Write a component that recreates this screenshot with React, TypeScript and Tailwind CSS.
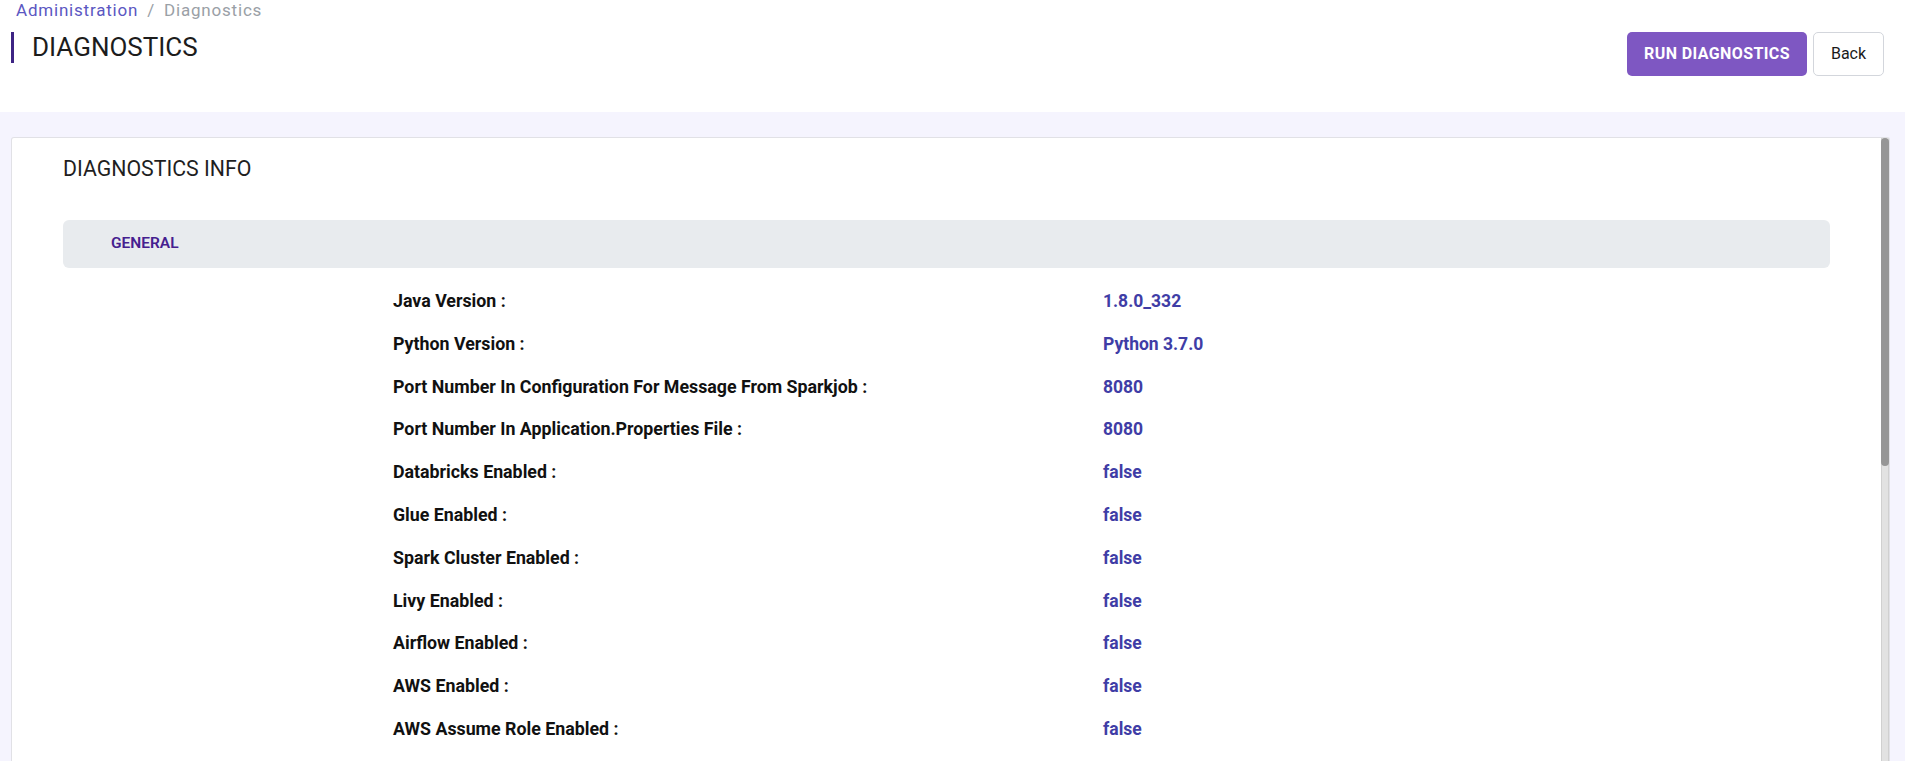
import React from "react";

type InfoRow = { label: string; value: string };

const generalRows: InfoRow[] = [
  { label: "Java Version", value: "1.8.0_332" },
  { label: "Python Version", value: "Python 3.7.0" },
  { label: "Port Number In Configuration For Message From Sparkjob", value: "8080" },
  { label: "Port Number In Application.Properties File", value: "8080" },
  { label: "Databricks Enabled", value: "false" },
  { label: "Glue Enabled", value: "false" },
  { label: "Spark Cluster Enabled", value: "false" },
  { label: "Livy Enabled", value: "false" },
  { label: "Airflow Enabled", value: "false" },
  { label: "AWS Enabled", value: "false" },
  { label: "AWS Assume Role Enabled", value: "false" },
];

function Header() {
  return (
    <div className="h-[112px] shrink-0 bg-white flex justify-between pl-[11px] pr-[21px]">
      <div>
        <div className="pl-[5px] leading-5 text-[17px] tracking-[0.8px] flex gap-[9px]">
          <span className="text-[#5b57c2]">Administration</span>
          <span className="text-[#9aa0a6]">/</span>
          <span className="text-[#9aa0a6]">Diagnostics</span>
        </div>
        <h1 className="mt-[12px] h-[31px] leading-[31px] border-l-[3px] border-[#3d2484] pl-[18px] text-[26px] text-[#1c1c1c]">
          DIAGNOSTICS
        </h1>
      </div>
      <div className="flex gap-[6px] pt-[32px] h-fit">
        <button className="h-[44px] px-[17px] rounded-[5px] bg-[#7e57c2] text-white text-[16px] tracking-[0.4px] font-bold">
          RUN DIAGNOSTICS
        </button>
        <button className="h-[44px] w-[71px] rounded-[5px] border border-[#d3d6dc] bg-white text-[16px] text-[#1a1a1a]">
          Back
        </button>
      </div>
    </div>
  );
}

function Scrollbar() {
  // drawn track + thumb, the headless browser hides native scrollbars
  return (
    <div className="w-[8px] shrink-0 bg-[#e2e2e2] border-x border-[#d0d0d0]">
      <div className="h-[328px] -mx-px bg-[#969696] rounded-full" />
    </div>
  );
}

export default function App() {
  return (
    <div className="h-screen overflow-hidden flex flex-col font-['Roboto','Liberation_Sans',sans-serif]">
      <Header />
      <div className="flex-1 min-h-0 bg-[#f5f4fe] pt-[25px] pl-[11px] pr-[15px]">
        <div className="h-full bg-white border border-b-0 border-[#e1e1e6] rounded-t-[3px] flex overflow-hidden">
          <div className="flex-1 min-w-0 px-[51px] pt-[17px]">
            <h2 className="text-[21.3px] leading-7 text-[#1f1f1f]">DIAGNOSTICS INFO</h2>
            <div className="mt-[37px] h-[48px] rounded-[6px] bg-[#e8ebee] flex items-center pl-[48px]">
              <span className="text-[15.5px] font-semibold text-[#45208f]">GENERAL</span>
            </div>
            <div className="mt-[11.6px]">
              {generalRows.map((row) => (
                <div key={row.label} className="h-[42.8px] flex items-center leading-6 font-bold">
                  <div className="w-[1040px] pl-[330px] shrink-0 text-[17.8px] text-[#111]">{row.label} :</div>
                  <div className="text-[17.5px] text-[#3f3da6]">{row.value}</div>
                </div>
              ))}
            </div>
          </div>
          <Scrollbar />
        </div>
      </div>
    </div>
  );
}
